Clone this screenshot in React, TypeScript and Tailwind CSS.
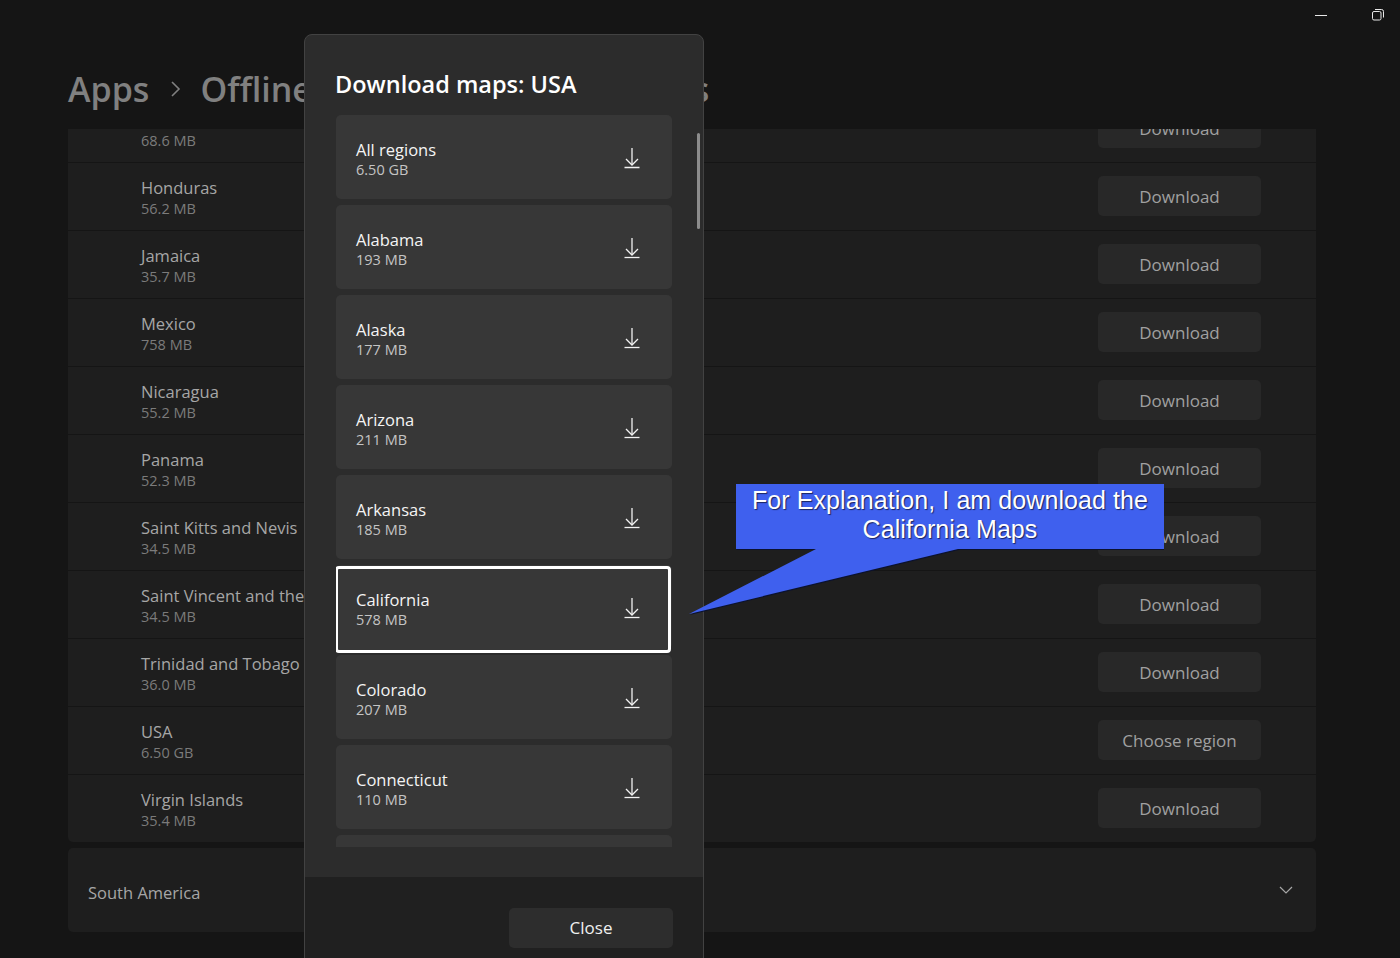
const FONT = "font-['Open_Sans','Noto_Sans',sans-serif]"

const COUNTRIES = [
  { name: "Haiti", size: "68.6 MB", action: "Download" },
  { name: "Honduras", size: "56.2 MB", action: "Download" },
  { name: "Jamaica", size: "35.7 MB", action: "Download" },
  { name: "Mexico", size: "758 MB", action: "Download" },
  { name: "Nicaragua", size: "55.2 MB", action: "Download" },
  { name: "Panama", size: "52.3 MB", action: "Download" },
  { name: "Saint Kitts and Nevis", size: "34.5 MB", action: "Download" },
  { name: "Saint Vincent and the Grenadines", size: "34.5 MB", action: "Download" },
  { name: "Trinidad and Tobago", size: "36.0 MB", action: "Download" },
  { name: "USA", size: "6.50 GB", action: "Choose region" },
  { name: "Virgin Islands", size: "35.4 MB", action: "Download" },
]

const REGIONS = [
  { name: "All regions", size: "6.50 GB" },
  { name: "Alabama", size: "193 MB" },
  { name: "Alaska", size: "177 MB" },
  { name: "Arizona", size: "211 MB" },
  { name: "Arkansas", size: "185 MB" },
  { name: "California", size: "578 MB", focused: true },
  { name: "Colorado", size: "207 MB" },
  { name: "Connecticut", size: "110 MB" },
  { name: "Delaware", size: "72 MB" },
]

function DownloadIcon() {
  return (
    <svg width="18" height="22" viewBox="0 0 18 22" fill="none" stroke="#f2f2f2" strokeWidth="1.3" className="shrink-0">
      <path d="M9 1v17" />
      <path d="M3 12l6 6 6-6" />
      <path d="M1.5 20.5h15" />
    </svg>
  )
}

function Chevron() {
  return (
    <svg width="12" height="18" viewBox="0 0 12 18" fill="none" stroke="#808080" strokeWidth="1.6" className="ml-[21px] mr-[18px]">
      <path d="M2 2l7 7-7 7" />
    </svg>
  )
}

function CountryRow({ name, size, action }: { name: string; size: string; action: string }) {
  return (
    <div className="flex h-[68px] items-center justify-between border-t border-[#151515] bg-[#1e1e1e] pb-px pl-[73px] pr-[55px]">
      <div className="whitespace-nowrap pt-1">
        <p className="text-[16.5px] leading-[21px] text-[#a6a6a6]">{name}</p>
        <p className="text-[14.5px] leading-[22px] text-[#7b7b7b]">{size}</p>
      </div>
      <button className="h-10 w-[163px] rounded-[5px] bg-[#282828] pt-px text-[17px] text-[#a0a0a0]">{action}</button>
    </div>
  )
}

function RegionCard({ name, size, focused }: { name: string; size: string; focused?: boolean }) {
  return (
    <div className="relative flex h-[84px] shrink-0 items-center justify-between rounded-[5px] bg-[#373737] pl-5 pr-[31px]">
      {focused && (
        <div className="absolute -left-px right-px top-px -bottom-1 rounded-[4px] border-[3px] border-white bg-[#373737]" />
      )}
      <div className="relative pt-[5px]">
        <p className="text-[16.5px] leading-[21px] text-[#f4f4f4]">{name}</p>
        <p className="text-[14.5px] leading-[20px] text-[#c4c4c4]">{size}</p>
      </div>
      <div className="relative mt-[2px]">
        <DownloadIcon />
      </div>
    </div>
  )
}

function Callout() {
  return (
    <div className="absolute left-[689px] top-[484px] h-[130px] w-[475px]">
      <svg width="475" height="131" viewBox="0 0 475 131" className="absolute left-0 top-0">
        <path d="M47 0H475V65H269L0 130L127 65H47Z" fill="#0b1230" transform="translate(0.8 1)" />
        <path d="M47 0H475V65H269L0 130L127 65H47Z" fill="#3f60ee" />
      </svg>
      <p className="absolute left-[47px] top-[2px] w-[428px] text-center font-['Liberation_Sans',sans-serif] text-[25px] leading-[29px] tracking-[0.08px] text-white [text-shadow:1px_1px_1px_#1a2460]">
        For Explanation, I am download the
        <br />
        California Maps
      </p>
    </div>
  )
}

export default function App() {
  return (
    <div className={`relative h-[958px] w-[1400px] overflow-hidden bg-[#151515] ${FONT}`}>
      <header className="relative h-[129px]">
        <div className="flex justify-end gap-[44px] pr-[16px] pt-[9px]">
          <svg width="13" height="12" viewBox="0 0 13 12" fill="none" stroke="#e8e8e8" strokeWidth="1">
            <path d="M0 6.5h12" />
          </svg>
          <svg width="12" height="12" viewBox="0 0 12 12" fill="none" stroke="#e8e8e8" strokeWidth="1">
            <rect x="0.5" y="2.5" width="8.5" height="8.5" rx="1.5" />
            <path d="M3 0.5h6.5a2 2 0 0 1 2 2V8.5" />
          </svg>
        </div>
        <div className="flex items-center whitespace-nowrap pl-[68px] pt-[44px] text-[34px] font-semibold leading-[48px] text-[#808080]">
          <span>Apps</span>
          <Chevron />
          <span>Offline maps</span>
          <Chevron />
          <span className="-ml-[17px]">Download maps</span>
        </div>
      </header>

      <main className="mx-[68px] w-[1248px]">
        <div className="h-[713px] overflow-hidden rounded-b-[5px]">
          <div className="-mt-[35px]">
            {COUNTRIES.map((country) => (
              <CountryRow key={country.name} {...country} />
            ))}
          </div>
        </div>
        <div className="mt-[6px] flex h-[84px] items-center justify-between rounded-[5px] bg-[#1e1e1e] pl-5 pr-[23px]">
          <span className="pt-[7px] text-[16.5px] text-[#a6a6a6]">South America</span>
          <svg width="14" height="14" viewBox="0 0 14 14" fill="none" stroke="#a6a6a6" strokeWidth="1.2">
            <path d="M1 4l6 6 6-6" />
          </svg>
        </div>
      </main>

      <div className="absolute -bottom-3 left-[304px] top-[34px] flex w-[400px] flex-col overflow-hidden rounded-[8px] border border-[#424242] bg-[#2c2c2c]">
        <div className="relative flex h-[842px] flex-col px-[31px]">
          <h2 className="-ml-px pb-[13px] pt-[31px] text-[23.5px] font-semibold leading-[36px] text-white">Download maps: USA</h2>
          <div className="flex h-[732px] flex-col gap-[6px] overflow-hidden">
            {REGIONS.map((region) => (
              <RegionCard key={region.name} {...region} />
            ))}
          </div>
          <div className="absolute right-[3px] top-[98px] h-[96px] w-[3px] rounded-full bg-[#8c8c8c]" />
        </div>
        <div className="flex flex-1 justify-end bg-[#202020] pr-[30px] pt-[31px]">
          <button className="h-10 w-[164px] rounded-[5px] bg-[#2d2d2d] text-[17px] text-[#f0f0f0]">Close</button>
        </div>
      </div>

      <Callout />
    </div>
  )
}
